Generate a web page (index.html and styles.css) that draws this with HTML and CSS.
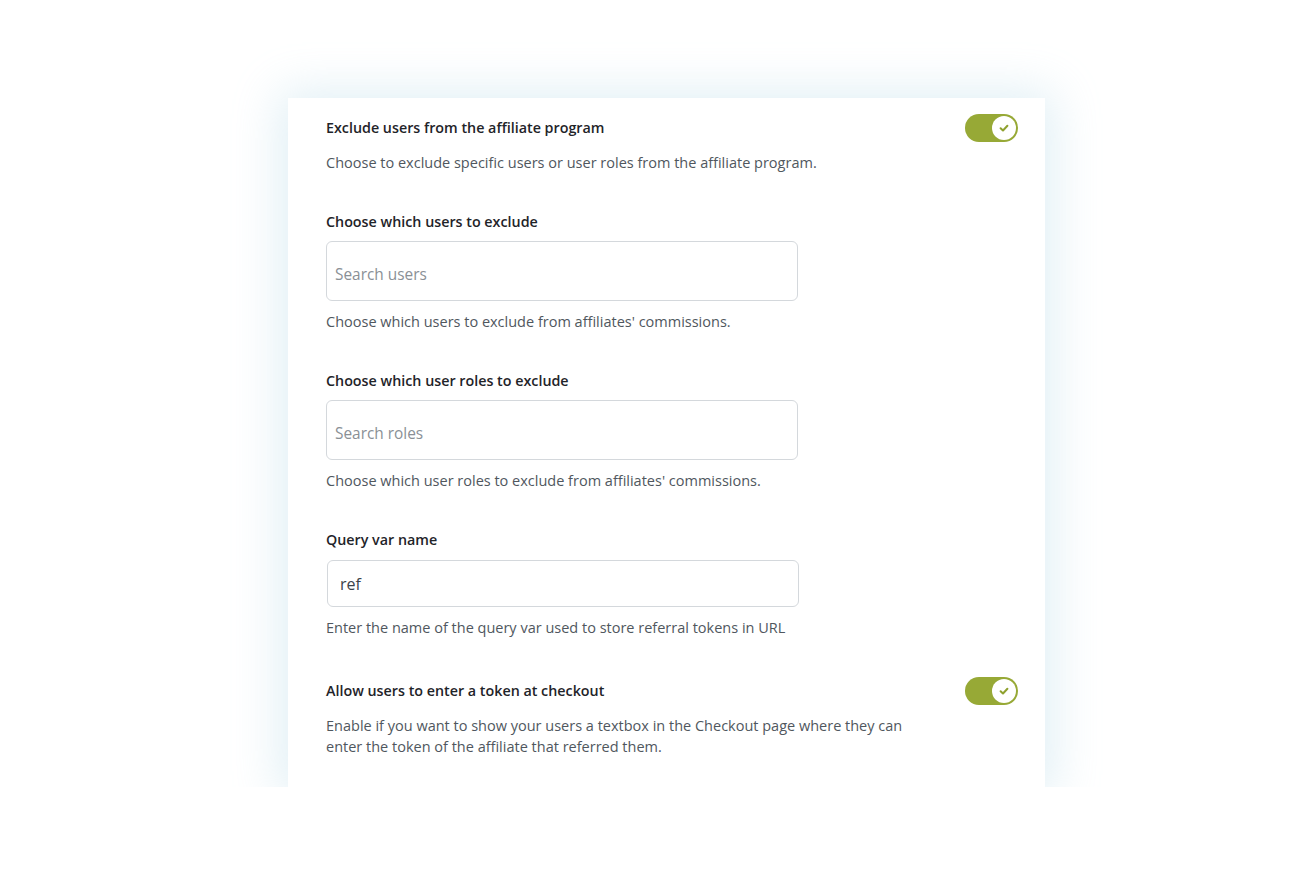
FILE: index.html
```html
<!DOCTYPE html>
<html>
<head>
<meta charset="utf-8">
<link rel="stylesheet" href="styles.css">
</head>
<body>
<div class="page">
  <div class="card">
    <div class="section">
      <div class="row">
        <div class="title">Exclude users from the affiliate program</div>
        <div class="toggle"><span class="knob"><svg viewBox="0 0 12 12" width="12" height="12"><path d="M2.6 6.2 L5 8.5 L9.4 3.8" fill="none" stroke="#8fa12f" stroke-width="2" stroke-linecap="round" stroke-linejoin="round"/></svg></span></div>
      </div>
      <p class="desc desc-top">Choose to exclude specific users or user roles from the affiliate program.</p>
    </div>
    <div class="section">
      <div class="title">Choose which users to exclude</div>
      <div class="input tall"><span class="placeholder">Search users</span></div>
      <p class="desc">Choose which users to exclude from affiliates' commissions.</p>
    </div>
    <div class="section">
      <div class="title">Choose which user roles to exclude</div>
      <div class="input tall"><span class="placeholder">Search roles</span></div>
      <p class="desc">Choose which user roles to exclude from affiliates' commissions.</p>
    </div>
    <div class="section">
      <div class="title">Query var name</div>
      <div class="input short"><span class="value">ref</span></div>
      <p class="desc">Enter the name of the query var used to store referral tokens in URL</p>
    </div>
    <div class="section">
      <div class="row">
        <div class="title">Allow users to enter a token at checkout</div>
        <div class="toggle"><span class="knob"><svg viewBox="0 0 12 12" width="12" height="12"><path d="M2.6 6.2 L5 8.5 L9.4 3.8" fill="none" stroke="#8fa12f" stroke-width="2" stroke-linecap="round" stroke-linejoin="round"/></svg></span></div>
      </div>
      <p class="desc desc-top wrap">Enable if you want to show your users a textbox in the Checkout page where they can enter the token of the affiliate that referred them.</p>
    </div>
  </div>
</div>
</body>
</html>
```

FILE: styles.css
```css
html, body {
  margin: 0;
  padding: 0;
  background: #ffffff;
}
body {
  font-family: "Open Sans", "Noto Sans", sans-serif;
  color: #1d2327;
}
.page {
  padding-top: 98px;
  padding-left: 288px;
}
.card {
  width: 757px;
  box-sizing: border-box;
  background: #ffffff;
  padding: 16px 27px 30px 38px;
  box-shadow: 0 2px 44px 8px rgba(160, 205, 225, 0.33);
}
.section + .section {
  margin-top: 39px;
}
.row {
  display: flex;
  justify-content: space-between;
  align-items: center;
  height: 28px;
}
.title {
  font-size: 14.3px;
  font-weight: 600;
  line-height: 20px;
  color: #1f2429;
}
.desc {
  margin: 10px 0 0 0;
  font-size: 14.5px;
  line-height: 21px;
  color: #50575e;
}
.desc.wrap {
  max-width: 590px;
}
.input {
  margin-top: 9px;
  width: 472px;
  box-sizing: border-box;
  border: 1px solid #d4d8dc;
  border-radius: 6px;
  display: flex;
  align-items: center;
  font-size: 15.4px;
}
.input.tall {
  height: 60px;
  padding-left: 8px;
  padding-top: 7px;
}
.input.short {
  height: 47px;
  margin-left: 1px;
  padding-left: 12px;
  margin-top: 10px;
  font-size: 16px;
}
.placeholder {
  color: #8a9096;
}
.value {
  color: #3c434a;
}
.toggle {
  width: 53px;
  height: 28px;
  border-radius: 14px;
  background: #97a936;
  position: relative;
  flex: none;
}
.knob {
  position: absolute;
  right: 2px;
  top: 2px;
  width: 24px;
  height: 24px;
  border-radius: 50%;
  background: #ffffff;
  display: flex;
  align-items: center;
  justify-content: center;
}
```
